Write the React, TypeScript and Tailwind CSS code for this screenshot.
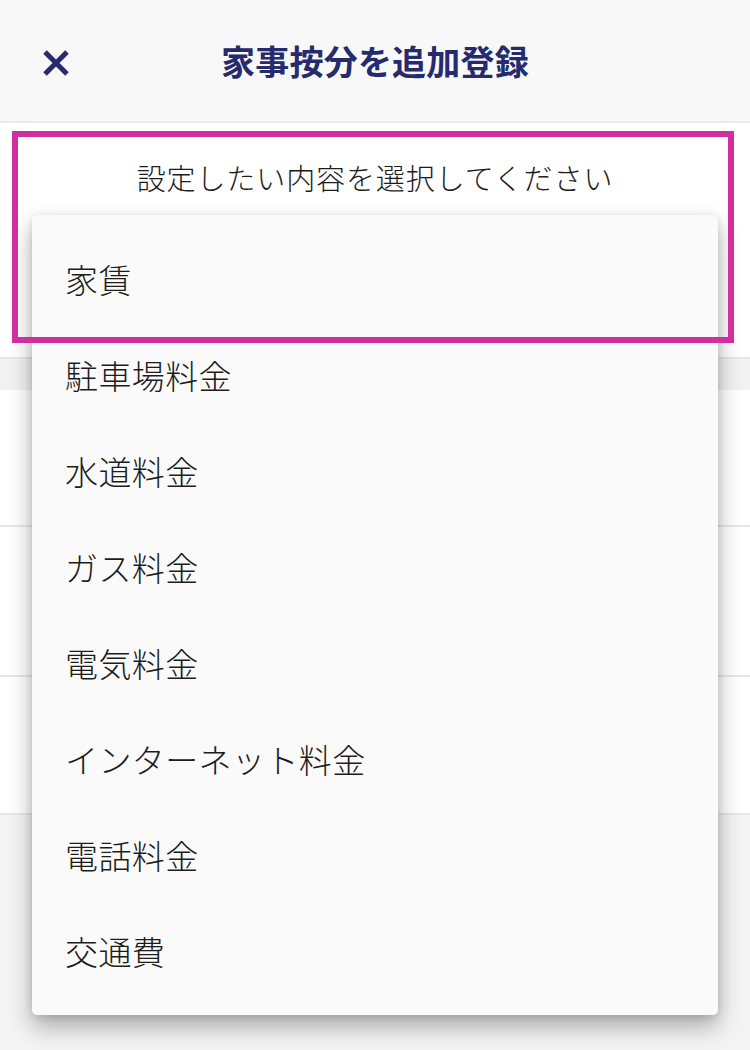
import React from "react";

const items = [
  "家賃",
  "駐車場料金",
  "水道料金",
  "ガス料金",
  "電気料金",
  "インターネット料金",
  "電話料金",
  "交通費",
];

export default function App() {
  return (
    <div className="relative w-[750px] h-[1050px] overflow-hidden bg-[#f4f4f4] font-['Noto_Sans_CJK_JP',sans-serif]">
      {/* Header */}
      <header className="grid h-[123px] grid-cols-[1fr_auto_1fr] items-center border-b-2 border-[#ebebeb] bg-[#f8f8f8]">
        <div className="pl-[42px]">
          <svg width="28" height="28" viewBox="0 0 28 28" className="mt-[4px]">
            <path d="M3 3 L25 25 M25 3 L3 25" stroke="#252b6d" strokeWidth="5" strokeLinecap="butt" />
          </svg>
        </div>
        <h1 className="text-[34px] font-bold leading-none tracking-[0.2px] text-[#252b6d]">
          家事按分を追加登録
        </h1>
        <div />
      </header>

      {/* Background content */}
      <section className="flex h-[234px] justify-center bg-white pt-[32px]">
        <p className="text-[29px] font-light leading-[44px] tracking-[0.9px] text-[#1c1c1c]">
          設定したい内容を選択してください
        </p>
      </section>
      <div className="h-[33px] border-t-2 border-[#e8e8e8] bg-[#f2f2f2]" />
      <div className="h-[137px] border-b-2 border-[#e8e8e8] bg-white" />
      <div className="h-[150px] border-b-2 border-[#e8e8e8] bg-white" />
      <div className="h-[138px] border-b-2 border-[#e8e8e8] bg-white" />

      {/* Dropdown menu */}
      <ul className="absolute left-[32px] top-[215px] w-[686px] rounded-[5px] bg-[#fafafa] py-[16px] shadow-[0_12px_24px_rgba(0,0,0,0.3),0_2px_8px_rgba(0,0,0,0.12)]">
        {items.map((t) => (
          <li
            key={t}
            className="flex h-[96px] items-center pl-[33px] text-[33px] font-light leading-none tracking-[0.4px] text-[#1c1c1c]"
          >
            {t}
          </li>
        ))}
      </ul>

      {/* Highlight annotation */}
      <div className="pointer-events-none absolute left-[12px] top-[131px] h-[212px] w-[722px] border-[6px] border-[#d02f9f]" />
    </div>
  );
}
